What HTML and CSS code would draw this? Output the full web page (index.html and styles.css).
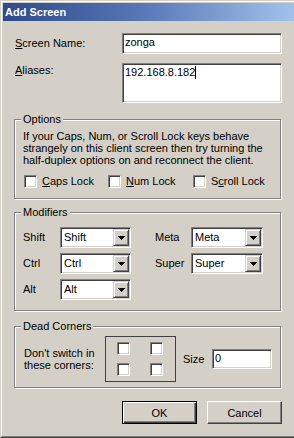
FILE: index.html
```html
<html lang="en">
<head>
  <title>Add Screen</title>
  <link rel="stylesheet" href="styles.css">
</head>
<body>
<div class="window">
  <div class="frame">
    <div class="titlebar">Add Screen</div>
    <div class="content">
      <div class="field-row">
        <div class="label"><u>S</u>creen Name:</div>
        <div class="edit">zonga</div>
      </div>
      <div class="field-row top">
        <div class="label"><u>A</u>liases:</div>
        <div class="edit tall">192.168.8.182<span class="caret"></span></div>
      </div>

      <div class="group options">
        <div class="legend">Options</div>
        <p class="note">If your Caps, Num, or Scroll Lock keys behave<br>strangely on this client screen then try turning the<br>half-duplex options on and reconnect the client.</p>
        <div class="checks">
          <div class="check"><span class="box"></span><span><u>C</u>aps Lock</span></div>
          <div class="check"><span class="box"></span><span><u>N</u>um Lock</span></div>
          <div class="check"><span class="box"></span><span>S<u>c</u>roll Lock</span></div>
        </div>
      </div>

      <div class="group modifiers">
        <div class="legend">Modifiers</div>
        <div class="mods">
          <span>Shift</span>
          <div class="combo"><span class="combo-text">Shift</span><span class="drop"><svg width="7" height="4" viewBox="0 0 7 4"><path d="M0 0h7v1H0zM1 1h5v1H1zM2 2h3v1H2zM3 3h1v1H3z" fill="#000"/></svg></span></div>
          <span></span>
          <span>Meta</span>
          <div class="combo"><span class="combo-text">Meta</span><span class="drop"><svg width="7" height="4" viewBox="0 0 7 4"><path d="M0 0h7v1H0zM1 1h5v1H1zM2 2h3v1H2zM3 3h1v1H3z" fill="#000"/></svg></span></div>

          <span>Ctrl</span>
          <div class="combo"><span class="combo-text">Ctrl</span><span class="drop"><svg width="7" height="4" viewBox="0 0 7 4"><path d="M0 0h7v1H0zM1 1h5v1H1zM2 2h3v1H2zM3 3h1v1H3z" fill="#000"/></svg></span></div>
          <span></span>
          <span>Super</span>
          <div class="combo"><span class="combo-text">Super</span><span class="drop"><svg width="7" height="4" viewBox="0 0 7 4"><path d="M0 0h7v1H0zM1 1h5v1H1zM2 2h3v1H2zM3 3h1v1H3z" fill="#000"/></svg></span></div>

          <span>Alt</span>
          <div class="combo"><span class="combo-text">Alt</span><span class="drop"><svg width="7" height="4" viewBox="0 0 7 4"><path d="M0 0h7v1H0zM1 1h5v1H1zM2 2h3v1H2zM3 3h1v1H3z" fill="#000"/></svg></span></div>
        </div>
      </div>

      <div class="group dead-corners">
        <div class="legend">Dead Corners</div>
        <div class="dead">
          <div class="dead-text">Don't switch in<br>these corners:</div>
          <div class="corners">
            <span class="box"></span><span class="box"></span>
            <span class="box"></span><span class="box"></span>
          </div>
          <div class="size-label">Size</div>
          <div class="edit size">0</div>
        </div>
      </div>

      <div class="buttons">
        <button class="btn default">OK</button>
        <button class="btn">Cancel</button>
      </div>
    </div>
  </div>
</div>
</body>
</html>
```

FILE: styles.css
```css
body {
    margin: 0;
    background: #d4d0c8;
    font-family: "Liberation Sans", Arial, sans-serif;
    font-size: 11px;
    line-height: 13px;
    color: #000;
}

.window {
    width: 294px;
    height: 438px;
    box-sizing: border-box;
    display: flex;
    border-top: 1px solid #d4d0c8;
    border-left: 1px solid #d4d0c8;
    border-bottom: 1px solid #404040;
}

.frame {
    flex: 1;
    display: flex;
    flex-direction: column;
    border-top: 1px solid #fff;
    border-left: 1px solid #fff;
    border-bottom: 1px solid #808080;
    padding: 1px 0 0 1px;
}

.titlebar {
    height: 18px;
    line-height: 18px;
    padding-left: 2px;
    font-weight: bold;
    color: #fff;
    background: linear-gradient(90deg, #2f4a88 0%, #5474b4 45%, #a2c2ec 100%);
}

.content {
    padding: 12px 14px 0 11px;
}

.field-row {
    display: flex;
    align-items: center;
}

.field-row.top {
    align-items: flex-start;
    margin-top: 9px;
}

.field-row.top .label {
    padding-top: 1px;
}

.label {
    width: 107px;
    padding-left: 1px;
}

.edit {
    flex: 1;
    height: 21px;
    box-sizing: border-box;
    margin-right: -1px;
    padding: 2px 0 0 2px;
    background: #fff;
    border: 1px solid;
    border-color: #808080 #fff #fff #808080;
    box-shadow: inset 1px 1px 0 #404040, inset -1px -1px 0 #d4d0c8;
    white-space: nowrap;
}

.edit.tall {
    height: 40px;
}

.caret {
    display: inline-block;
    width: 1px;
    height: 13px;
    background: #000;
    vertical-align: top;
}

.group {
    border: 1px solid #808080;
    box-shadow: inset 1px 1px 0 #fff, 1px 1px 0 #fff;
    padding: 0 8px 10px 8px;
}

.legend {
    width: fit-content;
    margin: -7px 0 0 -2px;
    padding: 0 2px;
    background: #d4d0c8;
}

.options {
    margin-top: 16px;
}

.note {
    margin: 4px 0 0;
    line-height: 12px;
}

.checks {
    display: grid;
    grid-template-columns: 84px 85px auto;
    margin: 9px 0 0 1px;
}

.check {
    display: flex;
    align-items: center;
    gap: 5px;
}

.box {
    width: 13px;
    height: 13px;
    box-sizing: border-box;
    background: #fff;
    border: 1px solid;
    border-color: #808080 #fff #fff #808080;
    box-shadow: inset 1px 1px 0 #404040, inset -1px -1px 0 #d4d0c8;
}

.modifiers {
    margin-top: 13px;
}

.mods {
    display: grid;
    grid-template-columns: 37px 71px 24px 36px 72px;
    row-gap: 5px;
    align-items: center;
    margin-top: 8px;
}

.combo {
    height: 21px;
    box-sizing: border-box;
    display: flex;
    align-items: center;
    background: #fff;
    border: 1px solid;
    border-color: #808080 #fff #fff #808080;
    box-shadow: inset 1px 1px 0 #404040, inset -1px -1px 0 #d4d0c8;
    padding: 1px;
}

.combo-text {
    padding-left: 2px;
}

.drop {
    margin-left: auto;
    width: 16px;
    height: 17px;
    box-sizing: border-box;
    display: flex;
    align-items: center;
    justify-content: center;
    background: #d4d0c8;
    border: 1px solid;
    border-color: #d4d0c8 #404040 #404040 #d4d0c8;
    box-shadow: inset 1px 1px 0 #fff, inset -1px -1px 0 #808080;
}

.drop svg {
    display: block;
}

.dead-corners {
    margin-top: 15px;
    padding-bottom: 5px;
}

.dead {
    display: flex;
    align-items: center;
    margin-top: 3px;
}

.dead-text {
    width: 81px;
    padding-left: 1px;
    line-height: 12px;
}

.corners {
    width: 71px;
    height: 46px;
    box-sizing: border-box;
    border: 1px solid #404048;
    display: grid;
    grid-template-columns: 13px 13px;
    grid-template-rows: 13px 13px;
    column-gap: 20px;
    row-gap: 8px;
    padding: 5px 0 0 11px;
}

.size-label {
    width: 29px;
    margin-left: 7px;
}

.edit.size {
    flex: none;
    width: 60px;
    height: 20px;
    margin: 0;
}

.buttons {
    display: flex;
    justify-content: flex-end;
    gap: 10px;
    margin: 13px -1px 0 0;
}

.btn {
    width: 75px;
    height: 23px;
    box-sizing: border-box;
    margin: 0;
    padding: 0;
    font-family: inherit;
    font-size: 11px;
    color: #000;
    background: #d4d0c8;
    border: 1px solid;
    border-color: #fff #404040 #404040 #fff;
    box-shadow: inset -1px -1px 0 #808080;
}

.btn.default {
    border: 1px solid #000;
    box-shadow: inset 1px 1px 0 #fff, inset -1px -1px 0 #404040, inset -2px -2px 0 #808080;
}
```
